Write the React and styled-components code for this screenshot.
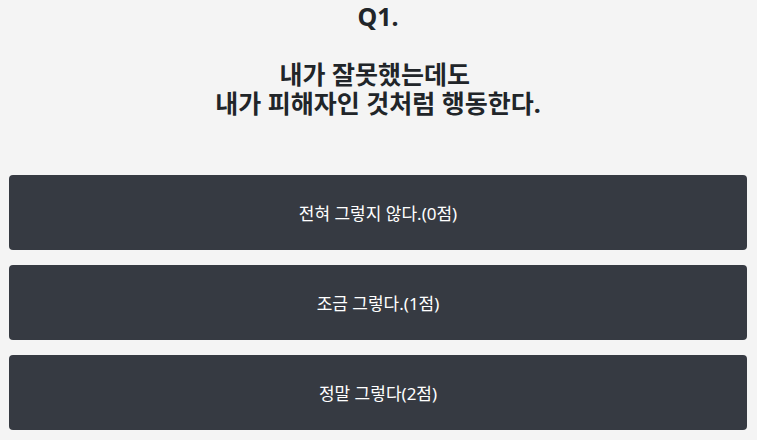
import React from 'react';
import styled, { createGlobalStyle } from 'styled-components';

const GlobalStyle = createGlobalStyle`
    body{
        margin: 0;
        background: #f4f4f4;
        font-family: "Noto Sans", "Noto Sans CJK KR", sans-serif;
        color: #212529;
    }
`;

const answers = ['전혀 그렇지 않다.(0점)', '조금 그렇다.(1점)', '정말 그렇다(2점)'];

function App() {
    return (
        <>
            <GlobalStyle />
            <QuizStyled>
                <Question>
                    Q1.
                    <br />
                    <br />
                    내가 잘못했는데도&nbsp;
                    <br />
                    내가 피해자인 것처럼 행동한다.
                </Question>
                <Answers>
                    {answers.map((a) => (
                        <AnswerButton key={a}>{a}</AnswerButton>
                    ))}
                </Answers>
            </QuizStyled>
        </>
    );
}

const QuizStyled = styled.main`
    padding: 0 10px 0 9px;
`;

const Question = styled.h2`
    margin: 0;
    padding-top: 2px;
    text-align: center;
    font-size: 25px;
    line-height: 29px;
    font-weight: 700;
    color: #212529;
`;

const Answers = styled.div`
    display: flex;
    flex-direction: column;
    gap: 15px;
    margin-top: 57px;
`;

const AnswerButton = styled.button`
    height: 75px;
    width: 100%;
    border: none;
    border-radius: 4px;
    background: #363a42;
    color: #fff;
    font-family: "Noto Sans", "Noto Sans CJK KR", sans-serif;
    font-size: 17px;
    cursor: pointer;
`;

export default App;
